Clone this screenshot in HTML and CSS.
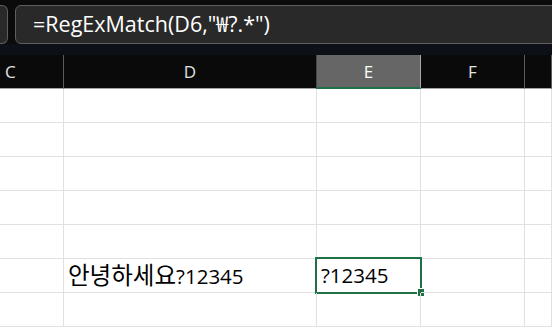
FILE: index.html
```html
<!DOCTYPE html>
<html lang="ko">
<head>
    <meta charset="UTF-8">
    <title>RegExMatch</title>
    <link rel="stylesheet" href="styles.css">
</head>
<body>
    <div class="toolbar">
        <div class="name-box"></div>
        <div class="formula-box">=RegExMatch(D6,"₩?.*")</div>
    </div>
    <div class="toolbar-gap"></div>

    <div class="sheet">
        <div class="col-head">C</div>
        <div class="col-head">D</div>
        <div class="col-head active">E</div>
        <div class="col-head">F</div>
        <div class="col-head"></div>

        <div class="cell"></div><div class="cell"></div><div class="cell"></div><div class="cell"></div><div class="cell"></div>
        <div class="cell"></div><div class="cell"></div><div class="cell"></div><div class="cell"></div><div class="cell"></div>
        <div class="cell"></div><div class="cell"></div><div class="cell"></div><div class="cell"></div><div class="cell"></div>
        <div class="cell"></div><div class="cell"></div><div class="cell"></div><div class="cell"></div><div class="cell"></div>
        <div class="cell"></div><div class="cell"></div><div class="cell"></div><div class="cell"></div><div class="cell"></div>

        <div class="cell"></div>
        <div class="cell"><span class="ko">안녕하세요</span>?12345</div>
        <div class="cell selected">?12345<span class="handle"></span></div>
        <div class="cell"></div>
        <div class="cell"></div>

        <div class="cell"></div><div class="cell"></div><div class="cell"></div><div class="cell"></div><div class="cell"></div>
    </div>
</body>
</html>
```

FILE: styles.css
```css
body {
    margin: 0;
    background-color: #fff;
    overflow: hidden;
    font-family: "Open Sans", "Noto Sans CJK KR", sans-serif;
}
.toolbar {
    display: flex;
    gap: 7px;
    padding-top: 5px;
    background-color: #0b0b0b;
    width: calc(100% + 20px);
}
.name-box {
    width: 8px;
    height: 39px;
    box-sizing: border-box;
    background-color: #292929;
    border: 1px solid #5e5e5e;
    border-left: none;
    border-radius: 0 6px 6px 0;
}
.formula-box {
    flex: 1;
    height: 39px;
    box-sizing: border-box;
    background-color: #292929;
    border: 1px solid #5e5e5e;
    border-radius: 6px;
    padding-left: 17px;
    color: #fff;
    font-size: 21.5px;
    line-height: 36px;
}
.toolbar-gap {
    height: 11px;
    background-color: #0d1016;
}
.sheet {
    display: grid;
    grid-template-columns: 64px 253px 104px 104px 1fr;
    grid-auto-rows: 34px;
}
.col-head {
    box-sizing: border-box;
    background-color: #0a0a0a;
    border-right: 1px solid #5a5a5a;
    border-bottom: 1px solid #a6a6a6;
    color: #e2e2e2;
    font-size: 17px;
    line-height: 33px;
    text-align: center;
}
.col-head:first-child {
    text-align: left;
    padding-left: 5px;
}
.col-head.active {
    background-color: #666;
    color: #fff;
    margin-left: -1px;
    border-left: 1px solid #474747;
    border-right-color: #a8a8a8;
    border-bottom: 2px solid #1e7145;
}
.cell {
    position: relative;
    box-sizing: border-box;
    border-right: 1px solid #e1e1e1;
    border-bottom: 1px solid #e1e1e1;
    padding-left: 4px;
    color: #000;
    font-size: 20.5px;
    line-height: 32px;
    white-space: nowrap;
}
.ko {
    font-size: 23.5px;
}
.selected::before {
    content: "";
    position: absolute;
    left: -2px;
    top: -2px;
    width: 107px;
    height: 37px;
    box-sizing: border-box;
    border: 2px solid #1e7145;
}
.handle {
    position: absolute;
    left: 100px;
    top: 29px;
    width: 6px;
    height: 7px;
    background-color: #1e7145;
    border-left: 1px solid #fff;
    border-top: 1px solid #fff;
}
```
